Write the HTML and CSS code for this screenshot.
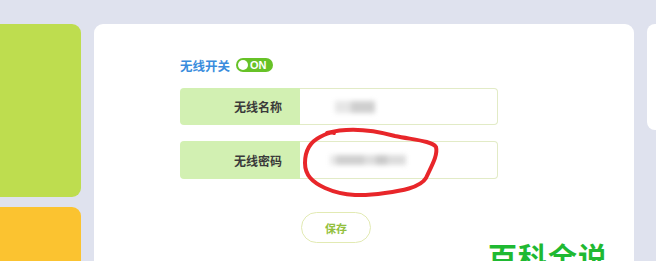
FILE: index.html
```html
<!DOCTYPE html>
<html lang="zh">
<head>
<meta charset="utf-8">
<link rel="stylesheet" href="styles.css">
</head>
<body>
<div class="page">
  <div class="side">
    <div class="tile tile-green"></div>
    <div class="tile tile-orange"></div>
  </div>
  <div class="main">
    <div class="form">
      <div class="switch-row">
        <span class="switch-label">无线开关</span>
        <span class="toggle"><span class="knob"></span><span class="on">ON</span></span>
      </div>
      <div class="field">
        <div class="label">无线名称</div>
        <div class="input"><span class="blur blur-a"></span></div>
      </div>
      <div class="field">
        <div class="label">无线密码</div>
        <div class="input"><span class="blur blur-b"></span></div>
      </div>
      <button class="save">保存</button>
    </div>
  </div>
  <div class="right"></div>
</div>
<svg class="circle" width="656" height="261" viewBox="0 0 656 261">
  <path d="M327 133 C345 128 370 129 395 136 C415 140 432 141 436 147 C438 155 432 165 426 178 C420 188 400 191 385 193 C365 196 345 197 325 188 C312 182 305 175 305 163 C305 150 310 142 320 137 C326 134 332 132 334 133" fill="none" stroke="#e8262a" stroke-width="4" stroke-linecap="round" stroke-linejoin="round"/>
</svg>
<div class="watermark">百科全说</div>
</body>
</html>
```

FILE: styles.css
```css
html, body {
  margin: 0;
  padding: 0;
}
body {
  width: 656px;
  height: 261px;
  overflow: hidden;
  background: #dfe2ee;
  font-family: "Noto Sans CJK SC", "Noto Sans", sans-serif;
  position: relative;
}
.page {
  display: flex;
  gap: 13px;
  padding-top: 24px;
  height: 237px;
}
.side {
  width: 91px;
  margin-left: -10px;
  display: flex;
  flex-direction: column;
  gap: 10px;
  flex: none;
}
.tile {
  border-radius: 9px;
}
.tile-green {
  height: 173px;
  background: #bedd4f;
}
.tile-orange {
  flex: 1;
  background: #fbc330;
  border-radius: 9px 9px 0 0;
}
.main {
  width: 540px;
  flex: none;
  background: #ffffff;
  border-radius: 9px 9px 0 0;
  padding: 34px 0 0 86px;
  box-sizing: border-box;
}
.right {
  width: 30px;
  height: 106px;
  flex: none;
  background: #ffffff;
  border-radius: 8px;
}
.form {
  display: flex;
  flex-direction: column;
  width: 318px;
}
.switch-row {
  display: flex;
  align-items: center;
  gap: 6px;
  height: 14px;
}
.switch-label {
  font-size: 12.5px;
  font-weight: 600;
  color: #3a8ddd;
}
.toggle {
  width: 37px;
  height: 14px;
  border-radius: 7px;
  background: #67c227;
  display: flex;
  align-items: center;
  padding: 0 2px;
  box-sizing: border-box;
  gap: 2px;
}
.knob {
  width: 10px;
  height: 10px;
  border-radius: 50%;
  background: #ffffff;
}
.on {
  color: #ffffff;
  font-family: "Liberation Sans", sans-serif;
  font-weight: bold;
  font-size: 11px;
  line-height: 14px;
}
.field {
  display: flex;
  height: 37px;
  margin-top: 16px;
}
.field + .field {
  height: 38px;
}
.label {
  width: 120px;
  background: #d2f0b2;
  border-radius: 4px 0 0 4px;
  display: flex;
  align-items: center;
  justify-content: flex-end;
  padding-right: 18px;
  box-sizing: border-box;
  font-size: 12px;
  font-weight: bold;
  color: #3a3a3a;
}
.input {
  width: 198px;
  border: 1px solid #e2ebc6;
  border-left: none;
  border-radius: 0 4px 4px 0;
  display: flex;
  align-items: center;
  box-sizing: border-box;
}
.blur {
  display: block;
  height: 12px;
  filter: blur(2.5px);
}
.blur-a {
  width: 40px;
  margin-left: 35px;
  background: linear-gradient(90deg, #e6e6e6 0 40%, #cfcfcf 40% 100%);
}
.blur-b {
  width: 76px;
  margin-left: 30px;
  height: 10px;
  background: linear-gradient(90deg, #e8e8e8 0 8%, #cfcfcf 8% 45%, #dedede 45% 60%, #c9c9c9 60% 75%, #dcdcdc 75% 100%);
}
.save {
  margin-top: 33px;
  margin-left: 121px;
  width: 70px;
  height: 31px;
  border: 1px solid #e2eab3;
  border-radius: 16px;
  background: #ffffff;
  font-family: "Noto Sans CJK SC", sans-serif;
  font-size: 11px;
  font-weight: bold;
  color: #93c03d;
  padding: 0;
}
.circle {
  position: absolute;
  left: 0;
  top: 0;
}
.watermark {
  position: absolute;
  left: 488px;
  top: 236px;
  font-size: 29px;
  font-weight: bold;
  color: #1fb932;
  letter-spacing: 1px;
  line-height: 40px;
  white-space: nowrap;
}
```
